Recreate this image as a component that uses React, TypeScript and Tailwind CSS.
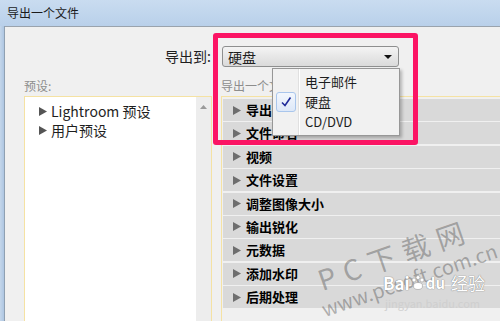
import React from "react";

const sections = ["导出位置", "文件命名", "视频", "文件设置", "调整图像大小", "输出锐化", "元数据", "添加水印", "后期处理"];

const Tri = ({ className }: { className?: string }) => (
    <svg width="8" height="9" viewBox="0 0 8 9" className={className}>
        <polygon points="0,0 8,4.5 0,9" fill="currentColor" />
    </svg>
);

const ExportMenu = () => (
    <div className="absolute left-[272px] top-[68px] w-[128px] h-[68px] bg-[#f1f1f1] border border-[#979797] shadow-[2px_2px_3px_rgba(0,0,0,0.25)] flex">
        <div className="w-[26px] border-r border-[#e0e0e0] flex flex-col pt-[23px] items-center">
            <div className="w-[20px] h-[20px] rounded-[3px] border border-[#a9c6ec] bg-gradient-to-b from-[#f3f7fd] to-[#dde8f8] flex items-center justify-center">
                <svg width="12" height="12" viewBox="0 0 12 12">
                    <path d="M2 6.5 L5 9.5 L10.5 1.5" stroke="#1f2b9a" strokeWidth="1.6" fill="none" />
                </svg>
            </div>
        </div>
        <div className="flex-1 border-l border-white pl-[5px] pt-[3px] text-[13px] leading-[20px] text-[#1e1e1e]">
            <div>电子邮件</div>
            <div>硬盘</div>
            <div>CD/DVD</div>
        </div>
    </div>
);

const Watermark = () => (
    <>
        <div className="absolute left-[324px] top-[262px] origin-bottom-left -rotate-[19deg] text-[28px] leading-[34px] tracking-[1px] text-[rgba(90,90,90,0.45)] whitespace-nowrap">
            P C 下 载 网
        </div>
        <div className="absolute left-[326px] top-[297px] origin-bottom-left -rotate-[19deg] text-[20px] leading-[24px] text-[rgba(90,90,90,0.45)] whitespace-nowrap">
            www.pcsoft.com.cn
        </div>
        <div className="absolute left-[383px] top-[272px] flex items-end text-[17px] leading-[22px] font-bold text-white [text-shadow:0_0_1px_#888,0_0_1px_#888]">
            <span>Bai</span>
            <svg width="14" height="16" viewBox="0 0 14 16" className="mb-[3px] mx-[1px]">
                <circle cx="3" cy="5" r="2" fill="#fff" stroke="#999" strokeWidth="0.6" />
                <circle cx="7" cy="2.5" r="2" fill="#fff" stroke="#999" strokeWidth="0.6" />
                <circle cx="11" cy="5" r="2" fill="#fff" stroke="#999" strokeWidth="0.6" />
                <ellipse cx="7" cy="11" rx="4.5" ry="3.5" fill="#fff" stroke="#999" strokeWidth="0.6" />
            </svg>
            <span className="text-[15px]">du</span>
            <span className="font-normal ml-[6px]">经验</span>
        </div>
        <div className="absolute left-[385px] top-[296px] text-[11px] leading-[14px] text-[#cfcfcf]">
            jingyan.baidu.com
        </div>
    </>
);

export default function App() {
    return (
        <div className="relative w-[500px] h-[321px] overflow-hidden bg-[#f0f0f0] font-['Noto_Sans_CJK_SC','Noto_Sans',sans-serif] text-[#1e1e1e]">
            <div className="h-[26px] bg-gradient-to-b from-[#c9dcf0] to-[#b9d0ea] pl-[7px] pt-[4px] text-[12px] leading-[17px] text-[#1b1b1b]">
                导出一个文件
            </div>
            <div className="flex h-[295px]">
                <div className="w-[5px] bg-gradient-to-r from-[#c4d6ea] to-[#aec6e2] border-r border-[#8fa0b2]" />
                <div className="flex-1 border-t border-[#9aa3ad] bg-[#f0f0f0] pl-[19px] pt-[19px]">
                    <div className="grid grid-cols-[188px_1fr] gap-x-[10px]">
                        <div className="text-right text-[14px] leading-[21px] pr-[1px]">导出到:</div>
                        <div className="w-[177px] h-[21px] rounded-[3px] border border-[#8e8f8f] bg-gradient-to-b from-[#f4f4f4] to-[#dadada] flex items-center justify-between pl-[5px] pr-[6px]">
                            <span className="text-[14px] leading-[18px]">硬盘</span>
                            <svg width="8" height="4" viewBox="0 0 8 4">
                                <polygon points="0,0 8,0 4,4" fill="#111" />
                            </svg>
                        </div>
                        <div className="mt-[11px] text-[12px] leading-[16px] text-[#8d8d8d]">预设:</div>
                        <div className="mt-[11px] -ml-[1px] text-[12px] leading-[16px] text-[#8d8d8d]">导出一个文件</div>
                        <div className="mt-[2px] h-[230px] border border-[#f5e2a3] bg-white flex">
                            <div className="flex-1 pt-[5px] pl-[14px] text-[14px] leading-[19px]">
                                <div className="flex items-center gap-[4px]">
                                    <Tri className="text-[#555]" />
                                    <span>Lightroom 预设</span>
                                </div>
                                <div className="flex items-center gap-[4px]">
                                    <Tri className="text-[#555]" />
                                    <span>用户预设</span>
                                </div>
                            </div>
                            <div className="w-[15px] bg-[#ededed] flex justify-center pt-[8px]">
                                <svg width="7" height="4" viewBox="0 0 7 4">
                                    <polygon points="0,4 7,4 3.5,0" fill="#9a9a9a" />
                                </svg>
                            </div>
                        </div>
                        <div className="mt-[2px] -ml-[1px] h-[230px] border-l border-t border-[#f5e2a3] bg-[#f0f0f0] pl-[1px] pt-[2px] flex flex-col gap-[1.4px]">
                            {sections.map((s) => (
                                <div key={s} className="h-[22px] shrink-0 bg-[#d9d9d9] flex items-center pl-[10px] gap-[5px]">
                                    <Tri className="text-[#6e6e6e]" />
                                    <span className="text-[13px] font-bold leading-[18px] text-black">{s}</span>
                                </div>
                            ))}
                        </div>
                    </div>
                </div>
            </div>
            <ExportMenu />
            <Watermark />
            <div className="absolute left-[213px] top-[33px] w-[205px] h-[112px] border-[5px] border-[#fb1464] rounded-[3px]" />
        </div>
    );
}
